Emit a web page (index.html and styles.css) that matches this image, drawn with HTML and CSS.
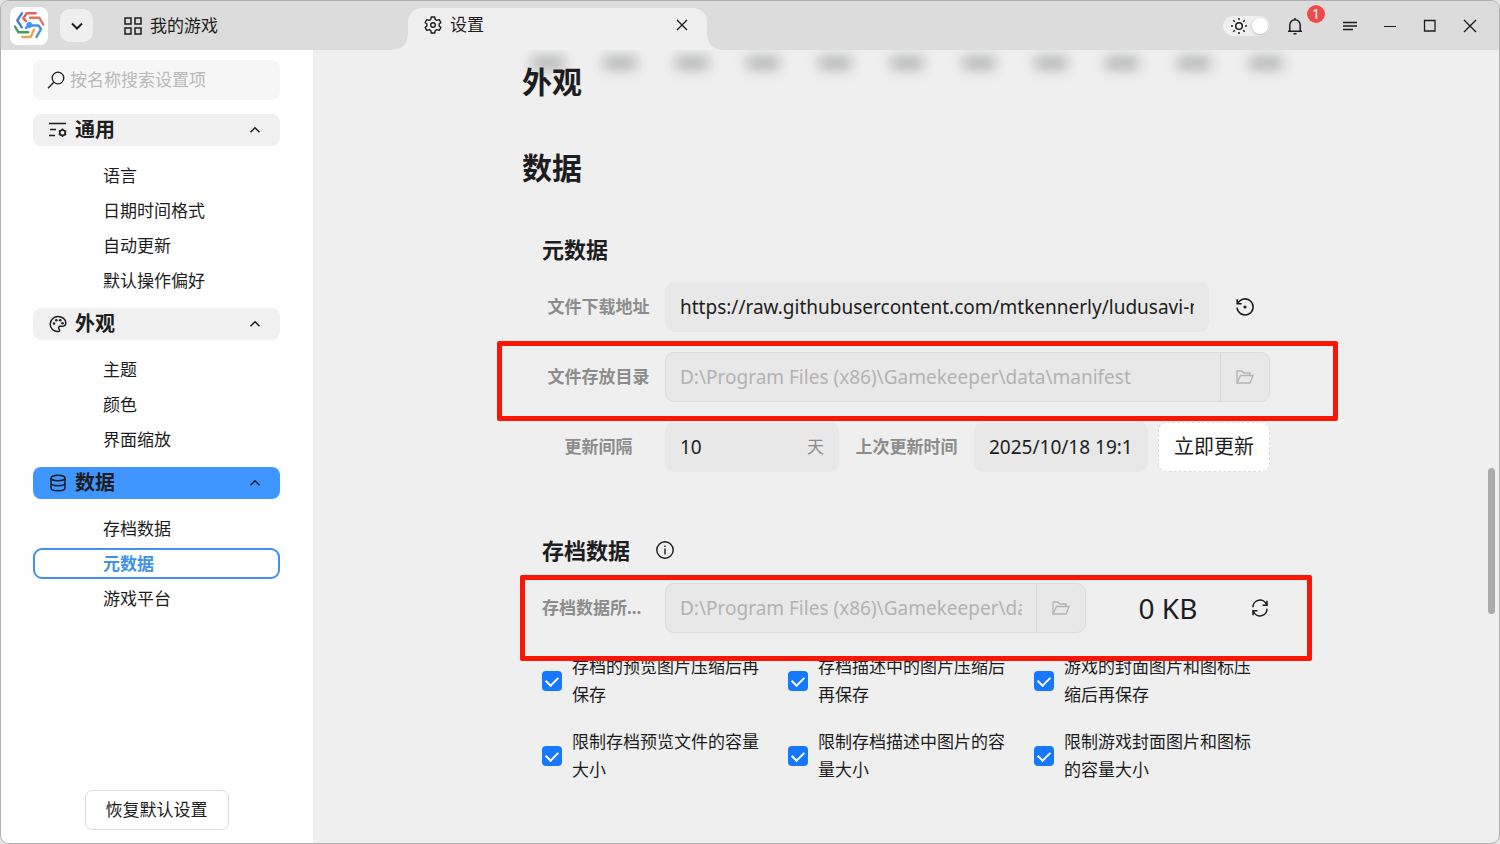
FILE: index.html
```html
<!DOCTYPE html>
<html lang="zh-CN">
<head>
<meta charset="utf-8">
<title>设置</title>
<link rel="stylesheet" href="styles.css">
</head>
<body>
<div class="window">
  <header class="titlebar">
    <div class="logo">
      <svg width="32" height="32" viewBox="0 0 32 32" fill="none" stroke-width="2.400" stroke-linecap="round" stroke-linejoin="round">
        <path d="M22.700 3.200h-9l-3.400 5.300 2.700 2.500" stroke="#e0605a"/>
        <path d="M17 7.800h9.300l4 6.700" stroke="#dd7560"/>
        <path d="M19.500 15.500h6l2.500 3.500-4.500 8" stroke="#4a8fe0"/>
        <path d="M21 19.500l-3.300 7.500H9.300" stroke="#e2a75c"/>
        <path d="M2 16.500l3.500 5.800h9.800" stroke="#3f9d63"/>
        <path d="M9 3.200 4.300 10.500 8.800 17.300" stroke="#3f7fd8"/>
        <path d="M16 15.300 13 18" stroke="#3f95ff"/>
        <circle cx="16.300" cy="15" r="3" fill="#3f95ff" stroke="none"/>
      </svg>
    </div>
    <button class="tab-menu" aria-label="标签列表">
      <svg width="14" height="14" viewBox="0 0 14 14" fill="none" stroke="currentColor" stroke-width="2"><path d="M2 4.500 7 9.500 12 4.500"/></svg>
    </button>
    <button class="tab tab-games">
      <svg width="18" height="18" viewBox="0 0 18 18" fill="none" stroke="currentColor" stroke-width="1.500"><path d="M1 1h6v6H1zM11 1h6v6h-6zM1 11h6v6H1zM11 11h6v6h-6z"/></svg>
      <span>我的游戏</span>
    </button>
    <div class="tab tab-active">
      <svg width="18" height="18" viewBox="0 0 18 18" fill="none" stroke="currentColor" stroke-width="1.400" stroke-linejoin="round"><path d="M7.300 1h3.400l.5 2.400 1.600.9 2.400-.7 1.700 2.900-1.800 1.600v1.800l1.800 1.600-1.700 2.900-2.400-.7-1.600.9-.5 2.400H7.300l-.5-2.400-1.600-.9-2.400.7-1.700-2.900 1.800-1.600V8.100L1.100 6.500l1.700-2.900 2.400.7 1.600-.9z"/><circle cx="9" cy="9" r="2.300"/></svg>
      <span>设置</span>
      <button class="tab-close" aria-label="关闭标签">
        <svg width="12" height="12" viewBox="0 0 12 12" stroke="currentColor" stroke-width="1.400"><path d="M1 1l10 10M11 1 1 11"/></svg>
      </button>
    </div>
    <div class="window-tools">
      <label class="theme-switch">
        <input type="checkbox" role="switch" aria-label="主题切换" checked>
        <svg width="16" height="16" viewBox="0 0 16 16" fill="none" stroke="currentColor" stroke-width="1.500"><circle cx="8" cy="8" r="3.300"/><path d="M8 0v2M8 14v2M0 8h2M14 8h2M2.300 2.300l1.400 1.400M12.300 12.300l1.400 1.400M2.300 13.700l1.400-1.400M12.300 3.700l1.400-1.400"/></svg>
      </label>
      <button class="tool bell" aria-label="通知">
        <svg width="18" height="18" viewBox="0 0 18 18" fill="none" stroke="currentColor" stroke-width="1.500"><path d="M2 14.200h14M3.800 14V8a5.200 5.200 0 0 1 10.400 0v6M9 1v2M7.500 16.800h3"/></svg>
        <span class="badge">1</span>
      </button>
      <button class="tool menu" aria-label="菜单">
        <svg width="16" height="10" viewBox="0 0 16 10" stroke="currentColor" stroke-width="1.600"><path d="M1 1.500h14M1 5h14M1 8.500h10"/></svg>
      </button>
      <button class="tool" aria-label="最小化">
        <svg width="14" height="14" viewBox="0 0 14 14" stroke="currentColor"><path d="M1 7.500h12"/></svg>
      </button>
      <button class="tool" aria-label="最大化">
        <svg width="14" height="14" viewBox="0 0 14 14" fill="none" stroke="currentColor" stroke-width="1.300"><path d="M1.500 1.500h10.500v10.500H1.500z"/></svg>
      </button>
      <button class="tool" aria-label="关闭">
        <svg width="14" height="14" viewBox="0 0 14 14" stroke="currentColor" stroke-width="1.400"><path d="M1 1l12 12M13 1 1 13"/></svg>
      </button>
    </div>
  </header>

  <div class="body">
    <aside class="sidebar">
      <label class="search">
        <svg width="18" height="18" viewBox="0 0 18 18" fill="none" stroke="currentColor" stroke-width="1.300"><circle cx="11" cy="7" r="5.800"/><path d="M6.800 11.200 1 17.200"/></svg>
        <input type="text" placeholder="按名称搜索设置项" aria-label="按名称搜索设置项">
      </label>
      <nav class="groups">
        <section>
          <button class="group-head">
            <svg width="18" height="18" viewBox="0 0 18 18" fill="none" stroke="currentColor" stroke-width="1.600"><path d="M0 2.500h17M1 8.500h6M0 14.500h6"/><circle cx="13.500" cy="11.700" r="2.700"/><path d="M13.500 7.400v1.600M13.500 14.400v1.600M9.800 9.600l1.400.8M15.800 13l1.400.8M9.800 13.800l1.400-.8M15.800 10.400l1.400-.8"/></svg>
            <span>通用</span>
            <svg class="caret" width="12" height="8" viewBox="0 0 12 8" fill="none" stroke="currentColor" stroke-width="1.500"><path d="M1.500 6.200 6 1.700 10.500 6.200"/></svg>
          </button>
          <ul>
            <li><a href="#lang">语言</a></li>
            <li><a href="#date">日期时间格式</a></li>
            <li><a href="#update">自动更新</a></li>
            <li><a href="#prefs">默认操作偏好</a></li>
          </ul>
        </section>
        <section>
          <button class="group-head">
            <svg width="18" height="18" viewBox="0 0 18 18" fill="none" stroke="currentColor" stroke-width="1.500"><path d="M9.500 16.500C4.500 17 1.200 13.300 1.200 9A7.800 7.800 0 0 1 9 1.500c4.400 0 7.800 2.800 7.800 6.200 0 2.400-1.700 3.600-3.900 3.600h-1.700c-1.700 0-1.900 1.500-1.200 2.600.9 1.200.9 2.400-.5 2.600z"/><g fill="currentColor" stroke="none"><circle cx="5" cy="8.500" r="1.300"/><circle cx="7.300" cy="5.200" r="1.300"/><circle cx="11.200" cy="5.200" r="1.300"/><circle cx="13.500" cy="8.300" r="1.300"/></g></svg>
            <span>外观</span>
            <svg class="caret" width="12" height="8" viewBox="0 0 12 8" fill="none" stroke="currentColor" stroke-width="1.500"><path d="M1.500 6.200 6 1.700 10.500 6.200"/></svg>
          </button>
          <ul>
            <li><a href="#theme">主题</a></li>
            <li><a href="#color">颜色</a></li>
            <li><a href="#zoom">界面缩放</a></li>
          </ul>
        </section>
        <section>
          <button class="group-head current">
            <svg width="18" height="18" viewBox="0 0 18 18" fill="none" stroke="currentColor" stroke-width="1.500"><ellipse cx="9" cy="4" rx="7" ry="2.800"/><path d="M2 4v10c0 1.600 3.100 2.800 7 2.800s7-1.200 7-2.800V4M2 9c0 1.500 3.100 2.700 7 2.700s7-1.200 7-2.700"/></svg>
            <span>数据</span>
            <svg class="caret" width="12" height="8" viewBox="0 0 12 8" fill="none" stroke="currentColor" stroke-width="1.500"><path d="M1.500 6.200 6 1.700 10.500 6.200"/></svg>
          </button>
          <ul>
            <li><a href="#saves">存档数据</a></li>
            <li><a href="#meta" class="selected">元数据</a></li>
            <li><a href="#platform">游戏平台</a></li>
          </ul>
        </section>
      </nav>
      <button class="restore">恢复默认设置</button>
    </aside>

    <main class="main">
      <div class="content">
        <div class="scale-marks" aria-hidden="true"><i></i><i></i><i></i><i></i><i></i><i></i><i></i><i></i><i></i><i></i><i></i></div>
        <h2>外观</h2>
        <h2>数据</h2>

        <section class="block" id="meta">
          <h3>元数据</h3>
          <div class="rows">
            <div class="row">
              <label class="name" for="url">文件下载地址</label>
              <input class="field grow" id="url" type="text" value="https://raw.githubusercontent.com/mtkennerly/ludusavi-manifest">
              <button class="icon-button" aria-label="重置">
                <svg width="18" height="18" viewBox="0 0 18 18" fill="none" stroke="currentColor" stroke-width="1.600"><path d="M2 5.200A8 8 0 1 1 1.100 9.500M1.200 1.200v4.500h4.500"/><circle cx="9" cy="9" r="1.600" fill="currentColor" stroke="none"/></svg>
              </button>
            </div>
            <div class="row">
              <label class="name" for="dir">文件存放目录</label>
              <div class="path grow">
                <input id="dir" type="text" value="D:\Program Files (x86)\Gamekeeper\data\manifest" disabled>
                <button aria-label="浏览" disabled>
                  <svg width="18" height="14" viewBox="0 0 18 14" fill="none" stroke="currentColor" stroke-width="1.300"><path d="M1 13V1h5l1.800 2H14v2.500M1 13h13l3-7.500H4.500z"/></svg>
                </button>
              </div>
              <div class="mark mark-manifest"></div>
            </div>
            <div class="row">
              <label class="name" for="interval">更新间隔</label>
              <div class="field with-unit">
                <input id="interval" type="text" value="10">
                <span>天</span>
              </div>
              <label class="name name-last" for="last">上次更新时间</label>
              <input class="field time" id="last" type="text" value="2025/10/18 19:17:32" readonly>
              <button class="update">立即更新</button>
            </div>
          </div>
        </section>

        <section class="block" id="saves">
          <h3>存档数据
            <svg width="18" height="18" viewBox="0 0 18 18" fill="none" stroke="currentColor" stroke-width="1.400"><circle cx="9" cy="9" r="8.200"/><path d="M9 7.500v6M9 4.500v1.600"/></svg>
          </h3>
          <div class="row">
            <label class="name name-start" for="savedir">存档数据所...</label>
            <div class="path savedir">
              <input id="savedir" type="text" value="D:\Program Files (x86)\Gamekeeper\data" disabled>
              <button aria-label="浏览" disabled>
                <svg width="18" height="14" viewBox="0 0 18 14" fill="none" stroke="currentColor" stroke-width="1.300"><path d="M1 13V1h5l1.800 2H14v2.500M1 13h13l3-7.500H4.500z"/></svg>
              </button>
            </div>
            <output class="size">0 KB</output>
            <button class="refresh" aria-label="刷新">
              <svg width="18" height="18" viewBox="0 0 18 18" fill="none" stroke="currentColor" stroke-width="1.500"><path d="M2 8.200A7 7 0 0 1 15.500 5.500M16 9.800A7 7 0 0 1 2.500 12.500M16 1.800v4.400h-4.400M2 16.200v-4.400h4.400"/></svg>
            </button>
            <div class="mark mark-saves"></div>
          </div>
          <div class="checks">
            <label><input type="checkbox" checked><span>存档的预览图片压缩后再保存</span></label>
            <label><input type="checkbox" checked><span>存档描述中的图片压缩后再保存</span></label>
            <label><input type="checkbox" checked><span>游戏的封面图片和图标压缩后再保存</span></label>
            <label><input type="checkbox" checked><span>限制存档预览文件的容量大小</span></label>
            <label><input type="checkbox" checked><span>限制存档描述中图片的容量大小</span></label>
            <label><input type="checkbox" checked><span>限制游戏封面图片和图标的容量大小</span></label>
          </div>
        </section>
      </div>
      <div class="scroll-thumb"></div>
    </main>
  </div>
</div>
</body>
</html>
```

FILE: styles.css
```css
* { box-sizing: border-box; }

body {
  margin: 0;
  background: #e4e4e4;
  color: #1d1d21;
  font: 17px/28px "Noto Sans", "Noto Sans CJK SC", sans-serif;
}

button, input {
  margin: 0;
  padding: 0;
  border: 0;
  background: none;
  color: inherit;
  font: inherit;
}

input { outline: 0; min-width: 0; }
svg { flex: none; display: block; }
h2, h3, ul { margin: 0; padding: 0; }
ul { list-style: none; }
a { color: inherit; text-decoration: none; }

.window {
  display: flex;
  flex-direction: column;
  height: 100vh;
  overflow: hidden;
  border: 1px solid #b0b0b0;
  border-radius: 9px;
  background: #efefef;
}

/* title bar */
.titlebar {
  flex: none;
  display: flex;
  align-items: center;
  height: 49px;
  padding-left: 9px;
  padding-right: 9px;
  background: #dcdcdc;
}

.logo {
  display: grid;
  place-items: center;
  width: 38px;
  height: 38px;
  border-radius: 8px;
  background: #fff;
}

.tab-menu {
  display: grid;
  place-items: center;
  width: 33px;
  height: 33px;
  margin-left: 12px;
  border-radius: 10px;
  background: #efefef;
}

.tab {
  display: flex;
  align-items: center;
  gap: 8px;
  height: 42px;
  text-align: left;
}

.tab-games {
  width: 284px;
  margin-left: 31px;
}

.tab-active {
  position: relative;
  align-self: flex-end;
  width: 299px;
  padding: 0 16px 8px;
  border-radius: 14px 14px 0 0;
  background: #efefef;
}

.tab-active::before,
.tab-active::after {
  content: "";
  position: absolute;
  bottom: 0;
  width: 14px;
  height: 14px;
}

.tab-active::before {
  right: 100%;
  background: radial-gradient(circle at 0 0, #dcdcdc 13px, #efefef 14px);
}

.tab-active::after {
  left: 100%;
  background: radial-gradient(circle at 100% 0, #dcdcdc 13px, #efefef 14px);
}

.tab-close {
  display: grid;
  place-items: center;
  width: 18px;
  height: 24px;
  margin-left: auto;
}

.window-tools {
  display: flex;
  align-items: center;
  margin-left: auto;
}

.theme-switch {
  position: relative;
  display: flex;
  align-items: center;
  width: 47px;
  height: 20px;
  margin-right: 5px;
  padding-left: 8px;
  border-radius: 10px;
  background: #efefef;
}

.theme-switch input {
  position: absolute;
  right: 1px;
  top: 1px;
  width: 16px;
  height: 16px;
  margin: 1px;
  appearance: none;
  border-radius: 50%;
  background: #fff;
  box-shadow: 0 1px 3px #bbb;
}

.tool {
  position: relative;
  display: grid;
  place-items: center;
  width: 40px;
  height: 40px;
}

.bell { margin-right: 15px; }

.badge {
  position: absolute;
  top: -1px;
  right: -10px;
  width: 18px;
  height: 18px;
  border-radius: 50%;
  background: #ee4a4a;
  box-shadow: 0 0 0 1px #f5dede;
  color: #fff;
  font-size: 14px;
  line-height: 18px;
  text-align: center;
}

/* sidebar */
.body {
  flex: 1;
  display: flex;
  min-height: 0;
}

.sidebar {
  flex: none;
  display: flex;
  flex-direction: column;
  width: 312px;
  padding: 10px 33px 13px 32px;
  background: #fff;
}

.search {
  display: flex;
  align-items: center;
  gap: 5px;
  height: 40px;
  margin-bottom: 14px;
  padding-left: 14px;
  border-radius: 8px;
  background: #f6f6f6;
}

.search input { flex: 1; }
.search input::placeholder { color: #b9b9b9; opacity: 1; }

.group-head {
  display: flex;
  align-items: center;
  gap: 8px;
  width: 100%;
  height: 32px;
  padding: 0 19px 0 16px;
  border-radius: 8px;
  background: #f0f0f0;
  font-size: 20px;
  font-weight: 700;
}

.group-head.current { background: #4096ff; }
.caret { margin-left: auto; }

.groups ul {
  padding: 12px 0 10px;
}

.groups li {
  padding: 2px 0;
}

.groups a {
  display: block;
  padding-left: 68px;
  border: 2px solid transparent;
  border-radius: 9px;
  line-height: 27px;
}

.groups a.selected {
  border-color: #4091e8;
  color: #4091e8;
  font-weight: 700;
}

.restore {
  align-self: center;
  height: 40px;
  margin-top: auto;
  padding: 0 20px;
  border: 1px solid #dcdcdc;
  border-radius: 7px;
  background: #fff;
}

/* settings page */
.main {
  position: relative;
  flex: 1;
  min-width: 0;
  overflow: hidden;
}

.content {
  position: relative;
  max-width: 768px;
  margin: 0 auto;
  padding-top: 10px;
}

.scale-marks {
  position: absolute;
  top: 5px;
  left: 8px;
  right: 6px;
  display: flex;
  justify-content: space-between;
}

.scale-marks i {
  width: 36px;
  height: 16px;
  border-radius: 8px;
  background: #bcbebd;
  filter: blur(6px);
}

h2 {
  position: relative;
  margin-bottom: 42px;
  font-size: 30px;
  line-height: 44px;
}

.block {
  margin: 0 20px 61px;
}

h3 {
  display: flex;
  align-items: center;
  gap: 26px;
  margin-bottom: 16px;
  font-size: 22px;
  line-height: 34px;
}

.rows {
  display: flex;
  flex-direction: column;
  gap: 20px;
}

.row {
  position: relative;
  display: flex;
  align-items: center;
  gap: 10px;
}

.name {
  flex: none;
  width: 113px;
  color: #8c8c8c;
  font-weight: 700;
  text-align: center;
  white-space: nowrap;
}

.name-last { width: 115px; }
.name-start { text-align: left; }

.grow { flex: 1; }

.field {
  height: 50px;
  padding: 0 15px;
  border-radius: 9px;
  background: #e8e8e8;
  font-size: 19px;
}

.with-unit {
  display: flex;
  align-items: center;
  width: 174px;
}

.with-unit input { flex: 1; }

.with-unit span {
  color: #8c8c8c;
  font-size: 17px;
}

.time { width: 174px; }

.icon-button,
.refresh {
  display: grid;
  place-items: center;
  width: 51px;
  height: 50px;
}

.refresh { width: 20px; }

.path {
  display: flex;
  height: 50px;
  border: 1px solid #dcdcdc;
  border-radius: 9px;
  background: #e8e8e8;
  color: #b2b2b2;
  font-size: 19px;
}

.path input {
  flex: 1;
  margin: 0 14px;
}

.path button {
  display: grid;
  place-items: center;
  width: 49px;
  border-left: 1px solid #d6d6d6;
}

.savedir { width: 421px; }

.update {
  flex: 1;
  height: 50px;
  border: 1px dashed #dcdcdc;
  border-radius: 9px;
  background: #fff;
  font-size: 20px;
}

.size {
  flex: 1;
  font-size: 28px;
  text-align: center;
}

.mark {
  position: absolute;
  z-index: 1;
  border: 5px solid #fb1505;
  border-radius: 2px;
  pointer-events: none;
}

.mark-manifest { inset: -11px -68px -19px -45px; }
.mark-saves { inset: -8px -42px -28px -22px; }

.checks {
  display: grid;
  grid-template-columns: repeat(3, 1fr);
  gap: 19px 10px;
  margin-top: 20px;
}

.checks label {
  display: flex;
  align-items: center;
  gap: 10px;
  padding-right: 8px;
}

.checks input {
  flex: none;
  display: grid;
  place-items: center;
  width: 20px;
  height: 20px;
  appearance: none;
  border-radius: 4px;
  background: #1677ff;
}

.checks input::after {
  content: "";
  width: 6px;
  height: 10px;
  margin-bottom: 3px;
  border: solid #fff;
  border-width: 0 2px 2px 0;
  rotate: 45deg;
}

.scroll-thumb {
  position: absolute;
  top: 418px;
  right: 4px;
  width: 7px;
  height: 146px;
  border-radius: 4px;
  background: #ababab;
}
```
